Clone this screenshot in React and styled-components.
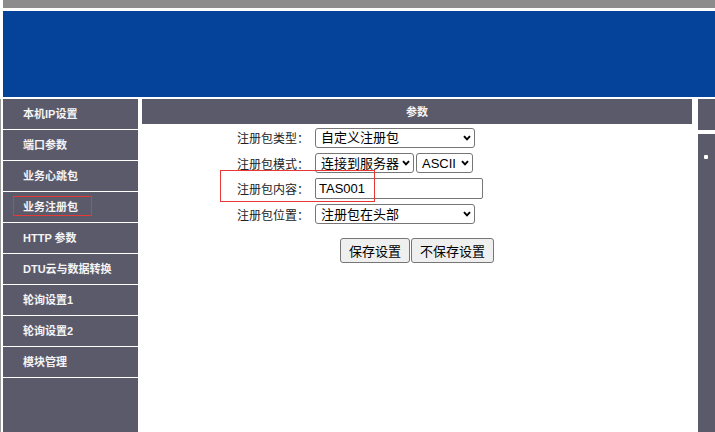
import React from "react";
import styled, { createGlobalStyle } from "styled-components";

const GlobalStyle = createGlobalStyle`
  html, body {
    margin: 0;
    padding: 0;
    background: #fff;
    overflow: hidden;
  }
  body {
    font-family: "Liberation Sans", "Noto Sans CJK SC", sans-serif;
  }
`;

const Page = styled.div`
  width: 760px;
  padding-left: 3px;
`;

const TopBar = styled.div`
  height: 8px;
  background-color: #8c8c8c;
  margin-bottom: 3px;
`;

const Banner = styled.div`
  height: 86px;
  background-color: #05439a;
  margin-bottom: 2px;
`;

const Main = styled.div`
  display: flex;
  align-items: flex-start;
  margin-left: -3px;
  padding-left: 2px;
  border-left: 1px solid #9a9a9a;
  height: 340px;
`;

const Sidebar = styled.div`
  width: 135px;
  display: flex;
  flex-direction: column;
  flex-shrink: 0;
`;

const NavItem = styled.div`
  position: relative;
  height: 30px;
  line-height: 31px;
  margin-bottom: 1px;
  padding-left: 20px;
  background-color: #5b5a6b;
  color: #f4f4f4;
  font-size: 11px;
  font-weight: bold;
  font-family: "Liberation Sans", "Noto Sans CJK SC", sans-serif;
`;

const NavMark = styled.span`
  position: absolute;
  left: 10px;
  top: 4px;
  width: 79px;
  height: 20px;
  border: 1px solid #e53935;
  box-sizing: border-box;
`;

const SideFill = styled.div`
  height: 120px;
  background-color: #5b5a6b;
`;

const Content = styled.div`
  position: relative;
  width: 550px;
  margin-left: 4px;
  flex-shrink: 0;
`;

const PanelHeader = styled.div`
  height: 25px;
  line-height: 25px;
  background-color: #5b5a6b;
  color: #f4f4f4;
  text-align: center;
  font-size: 11px;
  font-weight: bold;
  font-family: "Noto Sans CJK SC", sans-serif;
`;

const Form = styled.div`
  display: grid;
  grid-template-columns: 167px auto;
  grid-auto-rows: 25.5px;
  column-gap: 6px;
  align-items: center;
  margin-top: 1px;
`;

const Label = styled.div`
  text-align: right;
  font-size: 12px;
  color: #222;
  font-family: "Noto Sans CJK SC", sans-serif;
`;

const Field = styled.div`
  display: flex;
  gap: 2px;
  align-items: center;
`;

const SelectBox = styled.div`
  position: relative;
  width: ${(p) => p.$w}px;
  height: 20px;
`;

const Select = styled.select`
  appearance: none;
  width: 100%;
  height: 100%;
  padding: 0 14px 0 5px;
  font-size: 13px;
  font-family: "Liberation Sans", "Noto Sans CJK SC", sans-serif;
  color: #000;
  background: #fff;
  border: 1px solid #767676;
  border-radius: 3px;
  box-sizing: border-box;
  outline: none;
`;

const Chevron = styled.svg`
  position: absolute;
  right: 4px;
  top: 7px;
  width: 8px;
  height: 6px;
  pointer-events: none;
`;

const Input = styled.input`
  width: 168px;
  height: 21px;
  padding: 0 3px;
  font-size: 13px;
  font-family: "Liberation Sans", sans-serif;
  color: #000;
  border: 1px solid #767676;
  border-radius: 2px;
  box-sizing: border-box;
`;

const Buttons = styled.div`
  display: flex;
  justify-content: center;
  gap: 1px;
  margin-top: 11px;
`;

const Button = styled.button`
  height: 25px;
  padding: 0 8px;
  font-size: 13px;
  font-family: "Noto Sans CJK SC", sans-serif;
  color: #000;
  background-color: #efefef;
  border: 1px solid #767676;
  border-radius: 3px;
`;

const Highlight = styled.div`
  position: absolute;
  left: 78px;
  top: 71px;
  width: 155px;
  height: 32px;
  border: 1px solid #e53935;
  box-sizing: border-box;
  pointer-events: none;
`;

const RightCol = styled.div`
  width: 30px;
  margin-left: 6px;
  flex-shrink: 0;
`;

const RightBlock = styled.div`
  position: relative;
  height: ${(p) => p.$h}px;
  margin-bottom: 4px;
  background-color: #5b5a6b;
`;

const Bullet = styled.span`
  position: absolute;
  left: 6px;
  top: 21px;
  width: 4px;
  height: 4px;
  border-radius: 1px;
  background: #fff;
`;

const navItems = [
  "本机IP设置",
  "端口参数",
  "业务心跳包",
  "业务注册包",
  "HTTP 参数",
  "DTU云与数据转换",
  "轮询设置1",
  "轮询设置2",
  "模块管理",
];

const Dropdown = ({ width, value, children }) => (
  <SelectBox $w={width}>
    <Select defaultValue={value}>{children}</Select>
    <Chevron viewBox="0 0 8 6">
      <path d="M1 1.2 L4 4.4 L7 1.2" fill="none" stroke="#000" strokeWidth="1.9" />
    </Chevron>
  </SelectBox>
);

const App = () => (
  <Page>
    <GlobalStyle />
    <TopBar />
    <Banner />
    <Main>
      <Sidebar>
        {navItems.map((name) => (
          <NavItem key={name}>
            {name === "业务注册包" && <NavMark />}
            {name}
          </NavItem>
        ))}
        <SideFill />
      </Sidebar>
      <Content>
        <PanelHeader>参数</PanelHeader>
        <Form>
          <Label>注册包类型：</Label>
          <Field>
            <Dropdown width={160} value="custom">
              <option value="custom">自定义注册包</option>
            </Dropdown>
          </Field>
          <Label>注册包模式：</Label>
          <Field>
            <Dropdown width={99} value="server">
              <option value="server">连接到服务器</option>
            </Dropdown>
            <Dropdown width={57} value="ascii">
              <option value="ascii">ASCII</option>
            </Dropdown>
          </Field>
          <Label>注册包内容：</Label>
          <Field>
            <Input type="text" defaultValue="TAS001" />
          </Field>
          <Label>注册包位置：</Label>
          <Field>
            <Dropdown width={160} value="head">
              <option value="head">注册包在头部</option>
            </Dropdown>
          </Field>
        </Form>
        <Buttons>
          <Button type="button">保存设置</Button>
          <Button type="button">不保存设置</Button>
        </Buttons>
        <Highlight />
      </Content>
      <RightCol>
        <RightBlock $h={31} />
        <RightBlock $h={300}>
          <Bullet />
        </RightBlock>
      </RightCol>
    </Main>
  </Page>
);

export default App;
